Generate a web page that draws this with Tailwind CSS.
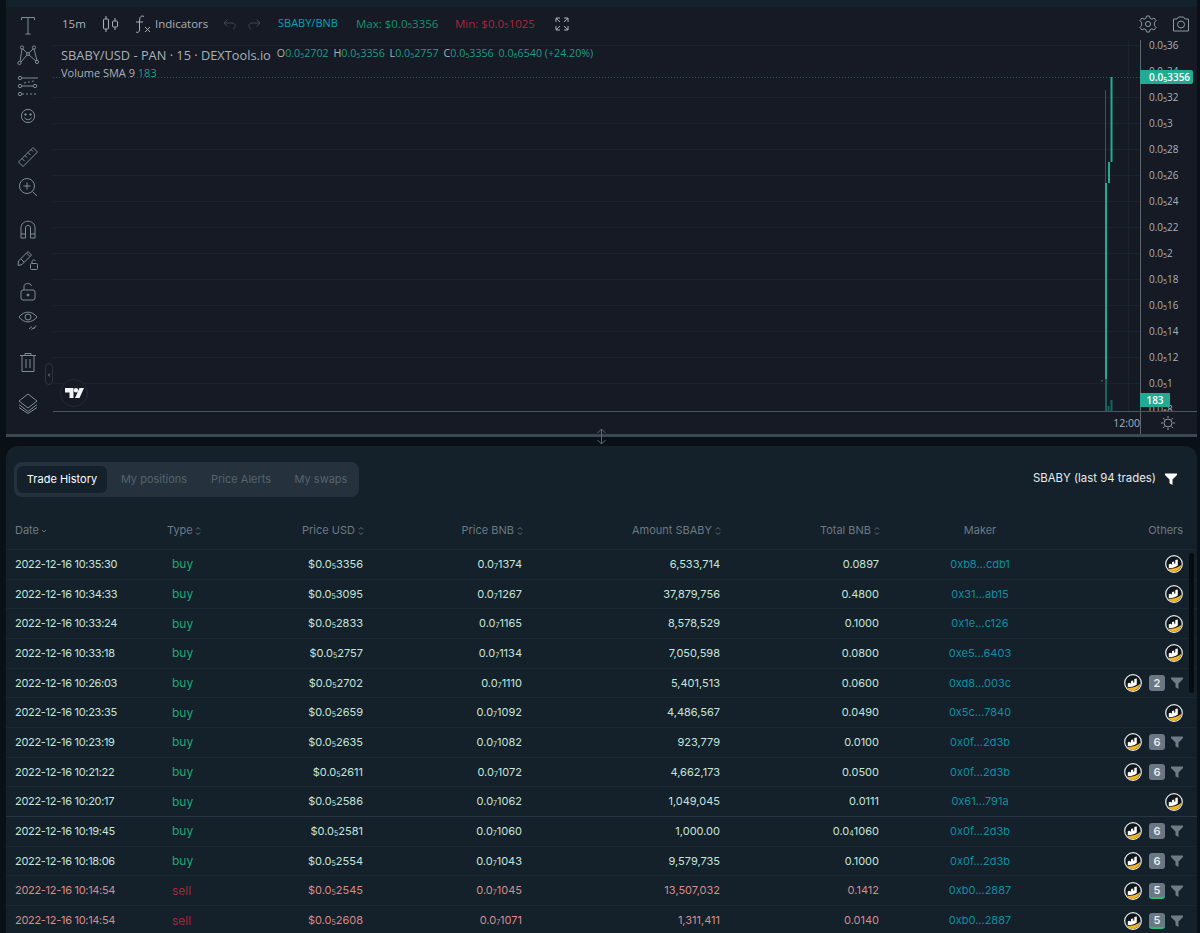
<!DOCTYPE html>
<html lang="en">
  <head>
    <meta charset="UTF-8" />
    <title>SBABY/BNB</title>
    <script src="https://cdn.jsdelivr.net/npm/@tailwindcss/browser@4"></script>
  </head>
  <body class="bg-[#0a1116] w-[1200px] h-[933px] overflow-hidden">
    <svg class="hidden">
      <symbol id="bit" viewBox="0 0 18 18">
        <circle cx="9" cy="9" r="8.300" fill="#10171c" stroke="#e8edee" stroke-width="1.200" />
        <path d="M3 13.500C7 14.500 12.500 13 16.400 9.800C16 13.500 12.500 16.900 9 16.900C6.500 16.900 4.500 15.600 3 13.500Z" fill="#f0b429" />
        <path d="M3.800 13V9.200L6 8.800V9.500L7 9.300V6.900L9.200 6.400V8.800L10.300 8.500V5L12.800 4.400V10.500C10 12.500 6.500 13.300 3.800 13Z" fill="#fff" />
      </symbol>
      <symbol id="fun" viewBox="0 0 12 12">
        <path d="M0 .5H12V2L7.500 6.500V12L4.500 10.200V6.500L0 2Z" fill="currentColor" />
      </symbol>
      <symbol id="sort" viewBox="0 0 6 10">
        <path d="M1 3.500L3 1.500L5 3.500M1 6.500L3 8.500L5 6.500" fill="none" stroke="currentColor" stroke-width=".9" />
      </symbol>
    </svg>

    <div class="h-[7px] ml-[6px] mr-[3px] bg-[#13212a]"></div>

    <!-- chart -->
    <div class="relative ml-[6px] mr-[3px] h-[430px] flex bg-[#161a25] border-b-[3px] border-[#3b4853] font-['Open_Sans',sans-serif] text-[#a9b1b8]">
      <div class="w-[47px] shrink-0 flex flex-col items-center pt-[7px] pr-[3px] text-[#7f8c94]">
        <svg class="w-[22px] h-[22px]" viewBox="0 0 22 22" fill="none" stroke="currentColor"><path d="M4.500 6V3.500H17.500V6M11 3.500V20M8.500 20H13.500" /></svg>
        <svg class="w-[22px] h-[22px] mt-[8px]" viewBox="0 0 22 22" fill="none" stroke="currentColor"><circle cx="5" cy="3.500" r="1.600" /><circle cx="17" cy="3.500" r="1.600" /><circle cx="2.500" cy="19" r="1.600" /><circle cx="20" cy="18" r="1.600" /><circle cx="11" cy="10" r="1.400" /><path d="M5 5L3 17.500M4 18L10 11M6 5L10 9M16 5L12 9M12 11L19 17M17 5L20 16.500" /></svg>
        <svg class="w-[22px] h-[22px] mt-[9px]" viewBox="0 0 22 22" fill="none" stroke="currentColor"><circle cx="3" cy="3" r="1.700" /><path d="M5 3H21" /><circle cx="3" cy="11" r="1.700" /><circle cx="18" cy="11" r="1.700" /><path d="M5 11H16" /><circle cx="3" cy="19" r="1.700" /><path d="M5 19H21M7 8L17 6" stroke-dasharray="2 2" /></svg>
        <svg class="w-[22px] h-[22px] mt-[8px]" viewBox="0 0 22 22" fill="none" stroke="currentColor"><circle cx="11" cy="11" r="6.600" /><circle cx="8.500" cy="9.500" r=".8" fill="currentColor" /><circle cx="13.500" cy="9.500" r=".8" fill="currentColor" /><path d="M7.500 12.500C9 15.500 13 15.500 14.500 12.500" /></svg>
        <svg class="w-[22px] h-[22px] mt-[19px]" viewBox="0 0 22 22" fill="none" stroke="currentColor"><path d="M1.500 16L16 1.500L20.500 6L6 20.500ZM5 12.500L7.500 15M8 9.500L10 11.500M11 6.500L13.500 9M14 3.500L16 5.500" /></svg>
        <svg class="w-[22px] h-[22px] mt-[8px]" viewBox="0 0 22 22" fill="none" stroke="currentColor"><circle cx="10" cy="10" r="7.500" /><path d="M10 6.500V13.500M6.500 10H13.500M15.500 15.500L20 20" /></svg>
        <svg class="w-[22px] h-[22px] mt-[20px]" viewBox="0 0 22 22" fill="none" stroke="currentColor"><path d="M4 20V10C4 1 18 1 18 10V20H13.500V10C13.500 6.500 8.500 6.500 8.500 10V20ZM4 16H8.500M13.500 16H18" /></svg>
        <svg class="w-[22px] h-[22px] mt-[9px]" viewBox="0 0 22 22" fill="none" stroke="currentColor"><path d="M1.500 12L11 2.500L14.500 6L5 15.500L1 16.500ZM9.500 4L13 7.500M4 10L7 13" /><rect x="13.500" y="14.500" width="7" height="6" rx="1" /><path d="M15 14.500V12.500C15 10.500 18 10.500 18.500 12" /></svg>
        <svg class="w-[22px] h-[22px] mt-[9px]" viewBox="0 0 22 22" fill="none" stroke="currentColor"><rect x="4" y="10" width="14" height="10" rx="2" /><path d="M7 10V6.500C7 2.500 14 2.500 14.500 6" /><circle cx="11" cy="15" r="1" fill="currentColor" /></svg>
        <svg class="w-[22px] h-[22px] mt-[7px]" viewBox="0 0 22 22" fill="none" stroke="currentColor"><path d="M2 8C7 1.500 15 1.500 20 8C15 14.500 7 14.500 2 8Z" /><circle cx="11" cy="8" r="3" /><path d="M12 20L15 17.500M16 19.500C18 19.500 18.500 18 19 16.500M14.500 20.500L18 18" /></svg>
        <svg class="w-[22px] h-[22px] mt-[20px]" viewBox="0 0 22 22" fill="none" stroke="currentColor"><path d="M3 4.500H19M8 4.500V2.500H14V4.500M5 4.500V20.500H17V4.500M9 8V17M13 8V17" /></svg>
        <svg class="w-[22px] h-[22px] mt-[19px]" viewBox="0 0 22 22" fill="none" stroke="currentColor"><path d="M11 2L20 9L11 16L2 9ZM2 12.500L11 19.500L20 12.500M2 15.500L11 21.500L20 15.500" /></svg>
      </div>

      <div class="flex-1 flex flex-col min-w-0">
        <div class="h-[33px] flex items-center text-[11.5px] text-[#a9b1b8] whitespace-nowrap">
          <span class="ml-[9px] w-[23px]">15m</span>
          <svg class="ml-[16px] w-[20px] h-[18px]" viewBox="0 0 20 18" fill="none" stroke="currentColor"><path d="M5 1V17M14 3V15" /><rect x="2.500" y="4" width="5" height="10" rx="1" fill="#161a25" /><rect x="11.500" y="6" width="5" height="6" rx="1" fill="#161a25" /></svg>
          <svg class="ml-[11px] w-[20px] h-[20px]" viewBox="0 0 20 20" fill="none" stroke="currentColor"><path d="M12 2.500C9 1 8 3 7.500 6V16C7 18.500 6 19 4 18M4 8H11M13 13L18 18M18 13L13 18" /></svg>
          <span class="ml-[3px] w-[53px]">Indicators</span>
          <svg class="ml-[15px] w-[14px] h-[12px] text-[#3c4650]" viewBox="0 0 14 12" fill="none" stroke="currentColor"><path d="M4.500 1.500L1 5L4.500 8.500M1 5H9C13 5 13 10 10 11" /></svg>
          <svg class="ml-[10px] w-[14px] h-[12px] text-[#3c4650]" viewBox="0 0 14 12" fill="none" stroke="currentColor"><path d="M9.500 1.500L13 5L9.500 8.500M13 5H5C1 5 1 10 4 11" /></svg>
          <span class="ml-[17px] w-[60px] text-[11px] text-[#09a0b8]">SBABY/BNB</span>
          <span class="ml-[18px] w-[81px] text-[#16926f]">Max: $0.0<span class="text-[8px]">5</span>3356</span>
          <span class="ml-[18px] w-[78px] text-[#a9263a]">Min: $0.0<span class="text-[8px]">5</span>1025</span>
          <svg class="ml-[22px] w-[14px] h-[14px]" viewBox="0 0 14 14" fill="none" stroke="currentColor"><path d="M1 5V1H5M1 1L5 5M9 1H13V5M13 1L9 5M1 9V13H5M1 13L5 9M13 9V13H9M13 13L9 9" /></svg>
          <svg class="ml-auto w-[18px] h-[18px] text-[#8d9aa2]" viewBox="0 0 18 18" fill="none" stroke="currentColor"><circle cx="9" cy="9" r="2.600" /><path d="M7.500 1H10.500L11 3.300L13 4.200L15 3L17 5.600L15.400 7.300V10.700L17 12.400L15 15L13 13.800L11 14.700L10.500 17H7.500L7 14.700L5 13.800L3 15L1 12.400L2.600 10.700V7.300L1 5.600L3 3L5 4.200L7 3.300Z" /></svg>
          <svg class="ml-[15px] mr-[7px] w-[18px] h-[16px] text-[#8d9aa2]" viewBox="0 0 18 16" fill="none" stroke="currentColor"><path d="M1.500 3H5L6.500 1H11.500L13 3H16.500V15H1.500Z" /><circle cx="9" cy="8.500" r="3.500" /></svg>
        </div>

        <div class="flex h-[371px]">
          <div class="relative w-[1087px] shrink-0 overflow-hidden">
            <svg class="absolute inset-0 w-full h-full" viewBox="53 40 1087 371">
              <g stroke="#1b232d">
                <path d="M53 45.500H1140M53 97.500H1140M53 123.500H1140M53 149.500H1140M53 175.500H1140M53 201.500H1140M53 227.500H1140M53 253.500H1140M53 279.500H1140M53 305.500H1140M53 331.500H1140M53 357.500H1140M53 383.500H1140M1128.500 40V411" />
              </g>
              <path d="M53 77.500H1140" stroke="#33504e" stroke-dasharray="1 2" />
              <path d="M1105.500 90V183" stroke="#2b5a5c" />
              <path d="M1106 183V379" stroke="#22ab94" stroke-width="2" />
              <path d="M1109 162V183" stroke="#22ab94" stroke-width="2" />
              <path d="M1111.500 77V162" stroke="#22ab94" stroke-width="2" />
              <path d="M1106 379V411M1111.500 400V411M1108.500 406V411M1102 380V381.500" stroke="#17645f" stroke-width="2" />
            </svg>
            <div class="absolute left-[8px] top-[4px] flex items-center whitespace-nowrap">
              <span class="text-[12.800px] leading-[18px]">SBABY/USD - PAN · 15 · DEXTools.io</span>
              <span class="ml-[6px] text-[10.700px] leading-[18px] text-[#1d9c88]"><span class="text-[#a9b1b8]">O</span>0.0<span class="text-[7px] align-[-1px]">5</span>2702 <span class="text-[#a9b1b8] ml-[2px]">H</span>0.0<span class="text-[7px] align-[-1px]">5</span>3356 <span class="text-[#a9b1b8] ml-[2px]">L</span>0.0<span class="text-[7px] align-[-1px]">5</span>2757 <span class="text-[#a9b1b8] ml-[2px]">C</span>0.0<span class="text-[7px] align-[-1px]">5</span>3356 <span class="ml-[2px]">0.0<span class="text-[7px] align-[-1px]">6</span>6540 (+24.20%)</span></span>
            </div>
            <div class="absolute left-[8px] top-[25px] text-[11px] leading-[16px] whitespace-nowrap">Volume SMA 9 <span class="text-[#1d9c88]">183</span></div>
            <div class="absolute left-[7px] top-[339px] w-[28px] h-[28px] rounded-full bg-[#161a25] border border-[#222a36] flex items-center justify-center">
              <svg class="w-[19px] h-[10px]" viewBox="0 0 19 10" fill="#f2f4f5"><path d="M0 0H8.500V10H4.500V4.500H0ZM14.500 0H19L14.500 10H10Z" /><circle cx="11" cy="2.200" r="2.200" /></svg>
            </div>
          </div>
          <div class="flex-1 h-full border-l border-[#5b666e] overflow-hidden text-[10px] pl-[8px]">
            <div class="-mt-[8px]">
              <div class="h-[26px] leading-[26px]">0.0<span class="text-[7px] align-[-1px]">5</span>36</div>
              <div class="h-[26px] leading-[26px]">0.0<span class="text-[7px] align-[-1px]">5</span>34</div>
              <div class="h-[26px] leading-[26px]">0.0<span class="text-[7px] align-[-1px]">5</span>32</div>
              <div class="h-[26px] leading-[26px]">0.0<span class="text-[7px] align-[-1px]">5</span>3</div>
              <div class="h-[26px] leading-[26px]">0.0<span class="text-[7px] align-[-1px]">5</span>28</div>
              <div class="h-[26px] leading-[26px]">0.0<span class="text-[7px] align-[-1px]">5</span>26</div>
              <div class="h-[26px] leading-[26px]">0.0<span class="text-[7px] align-[-1px]">5</span>24</div>
              <div class="h-[26px] leading-[26px]">0.0<span class="text-[7px] align-[-1px]">5</span>22</div>
              <div class="h-[26px] leading-[26px]">0.0<span class="text-[7px] align-[-1px]">5</span>2</div>
              <div class="h-[26px] leading-[26px]">0.0<span class="text-[7px] align-[-1px]">5</span>18</div>
              <div class="h-[26px] leading-[26px]">0.0<span class="text-[7px] align-[-1px]">5</span>16</div>
              <div class="h-[26px] leading-[26px]">0.0<span class="text-[7px] align-[-1px]">5</span>14</div>
              <div class="h-[26px] leading-[26px]">0.0<span class="text-[7px] align-[-1px]">5</span>12</div>
              <div class="h-[26px] leading-[26px]">0.0<span class="text-[7px] align-[-1px]">5</span>1</div>
              <div class="h-[26px] leading-[26px]">0.0<span class="text-[7px] align-[-1px]">6</span>8</div>
            </div>
          </div>
        </div>

        <div class="h-[23px] border-t border-[#4a555e] flex text-[10.500px]">
          <div class="w-[1087px] shrink-0 text-right leading-[22px]">12:00</div>
          <div class="flex-1 border-l border-[#5b666e] flex items-center justify-center pr-[3px]">
            <svg class="w-[14px] h-[14px] text-[#8d9aa2]" viewBox="0 0 14 14" fill="none" stroke="currentColor"><circle cx="7" cy="7" r="4" /><path d="M7 0V2M7 12V14M0 7H2M12 7H14M2 2L3.500 3.500M10.500 10.500L12 12M12 2L10.500 3.500M3.500 10.500L2 12" /></svg>
          </div>
        </div>
      </div>

      <!-- last price tags on the axis -->
      <div class="absolute left-[1134px] top-[63px] w-[53px] h-[14px] bg-[#22ab94] rounded-r-[2px] pl-[9px] text-[10px] leading-[14px] font-semibold text-white">0.0<span class="text-[7px] align-[-1px]">5</span>3356</div>
      <div class="absolute left-[1134px] top-[386px] w-[30px] h-[14px] bg-[#22ab94] text-center text-[10px] leading-[14px] font-semibold text-white">183</div>
      <div class="absolute left-[39px] top-[356px] w-[8px] h-[22px] rounded-full border border-[#2b3440] bg-[#161a25] flex items-center justify-center text-[8px] leading-none">‹</div>
    </div>

    <!-- drag handle -->
    <div class="relative h-[9px]">
      <svg class="absolute left-[596px] -top-[9px] w-[11px] h-[17px] text-[#5d6a74]" viewBox="0 0 11 17" fill="none" stroke="currentColor"><path d="M5.500 1V16M1.500 5L5.500 1L9.500 5M1.500 12L5.500 16L9.500 12" /></svg>
    </div>

    <!-- trades panel -->
    <div class="relative ml-[6px] mr-[3px] h-[487px] bg-[#14202a] rounded-t-[12px] font-['Inter',sans-serif] text-[11px] overflow-hidden">
      <div class="flex items-center justify-between h-[66px] pl-[8px] pr-[20px]">
        <div class="flex items-center h-[35px] pl-[3px] pr-[11px] rounded-lg bg-[#25323d] text-[#55626d] whitespace-nowrap">
          <div class="h-[27px] w-[90px] rounded-md bg-[#14202a] text-white text-center leading-[27px]">Trade History</div>
          <div class="w-[68px] ml-[13px] text-center">My positions</div>
          <div class="w-[60px] ml-[23px] text-center">Price Alerts</div>
          <div class="w-[54px] ml-[23px] text-center">My swaps</div>
        </div>
        <div class="flex items-center text-[11.400px] text-[#e6ecee]">
          <span>SBABY (last 94 trades)</span>
          <svg class="ml-[9px] w-[12px] h-[12px] text-white"><use href="#fun" /></svg>
        </div>
      </div>

      <div class="grid grid-cols-[150px_40px_159px_159px_198px_159px_200px_103px] pl-[9px] h-[38px] items-center border-b border-[#1a2832] text-[#6b7a84]">
        <div class="flex items-center">Date<svg class="ml-[2px] w-[6px] h-[4px]" viewBox="0 0 6 4" fill="none" stroke="currentColor" stroke-width=".9"><path d="M1 1L3 3L5 1" /></svg></div>
        <div class="pl-[2px] flex items-center">Type<svg class="ml-[2px] w-[6px] h-[10px]"><use href="#sort" /></svg></div>
        <div class="flex items-center justify-end">Price USD<svg class="ml-[3px] w-[6px] h-[10px]"><use href="#sort" /></svg></div>
        <div class="flex items-center justify-end">Price BNB<svg class="ml-[3px] w-[6px] h-[10px]"><use href="#sort" /></svg></div>
        <div class="flex items-center justify-end">Amount SBABY<svg class="ml-[3px] w-[6px] h-[10px]"><use href="#sort" /></svg></div>
        <div class="flex items-center justify-end">Total BNB<svg class="ml-[3px] w-[6px] h-[10px]"><use href="#sort" /></svg></div>
        <div class="text-center">Maker</div>
        <div class="text-right">Others</div>
      </div>

      <div class="grid grid-cols-[150px_40px_159px_159px_198px_159px_200px_103px] pl-[9px] h-[29.67px] items-center border-b border-[#1a2832] text-[#c5e6dc]">
        <div class="tracking-[-0.3px]">2022-12-16 10:35:30</div><div class="pl-[7px] text-[12px] text-[#1fa774]">buy</div><div class="text-right pr-[1px]">$0.0<span class="text-[7px] align-[-1px]">5</span>3356</div><div class="text-right pr-[1px]">0.0<span class="text-[7px] align-[-1px]">7</span>1374</div><div class="text-right pr-[1px]">6,533,714</div><div class="text-right pr-[1px]">0.0897</div><div class="text-center text-[#0e8fa3]">0xb8...cdb1</div>
        <div class="flex justify-end items-center"><svg class="w-[18px] h-[18px]"><use href="#bit" /></svg></div>
      </div>
      <div class="grid grid-cols-[150px_40px_159px_159px_198px_159px_200px_103px] pl-[9px] h-[29.67px] items-center border-b border-[#1a2832] text-[#c5e6dc]">
        <div class="tracking-[-0.3px]">2022-12-16 10:34:33</div><div class="pl-[7px] text-[12px] text-[#1fa774]">buy</div><div class="text-right pr-[1px]">$0.0<span class="text-[7px] align-[-1px]">5</span>3095</div><div class="text-right pr-[1px]">0.0<span class="text-[7px] align-[-1px]">7</span>1267</div><div class="text-right pr-[1px]">37,879,756</div><div class="text-right pr-[1px]">0.4800</div><div class="text-center text-[#0e8fa3]">0x31...ab15</div>
        <div class="flex justify-end items-center"><svg class="w-[18px] h-[18px]"><use href="#bit" /></svg></div>
      </div>
      <div class="grid grid-cols-[150px_40px_159px_159px_198px_159px_200px_103px] pl-[9px] h-[29.67px] items-center border-b border-[#1a2832] text-[#c5e6dc]">
        <div class="tracking-[-0.3px]">2022-12-16 10:33:24</div><div class="pl-[7px] text-[12px] text-[#1fa774]">buy</div><div class="text-right pr-[1px]">$0.0<span class="text-[7px] align-[-1px]">5</span>2833</div><div class="text-right pr-[1px]">0.0<span class="text-[7px] align-[-1px]">7</span>1165</div><div class="text-right pr-[1px]">8,578,529</div><div class="text-right pr-[1px]">0.1000</div><div class="text-center text-[#0e8fa3]">0x1e...c126</div>
        <div class="flex justify-end items-center"><svg class="w-[18px] h-[18px]"><use href="#bit" /></svg></div>
      </div>
      <div class="grid grid-cols-[150px_40px_159px_159px_198px_159px_200px_103px] pl-[9px] h-[29.67px] items-center border-b border-[#1a2832] text-[#c5e6dc]">
        <div class="tracking-[-0.3px]">2022-12-16 10:33:18</div><div class="pl-[7px] text-[12px] text-[#1fa774]">buy</div><div class="text-right pr-[1px]">$0.0<span class="text-[7px] align-[-1px]">5</span>2757</div><div class="text-right pr-[1px]">0.0<span class="text-[7px] align-[-1px]">7</span>1134</div><div class="text-right pr-[1px]">7,050,598</div><div class="text-right pr-[1px]">0.0800</div><div class="text-center text-[#0e8fa3]">0xe5...6403</div>
        <div class="flex justify-end items-center"><svg class="w-[18px] h-[18px]"><use href="#bit" /></svg></div>
      </div>
      <div class="grid grid-cols-[150px_40px_159px_159px_198px_159px_200px_103px] pl-[9px] h-[29.67px] items-center border-b border-[#1a2832] text-[#c5e6dc]">
        <div class="tracking-[-0.3px]">2022-12-16 10:26:03</div><div class="pl-[7px] text-[12px] text-[#1fa774]">buy</div><div class="text-right pr-[1px]">$0.0<span class="text-[7px] align-[-1px]">5</span>2702</div><div class="text-right pr-[1px]">0.0<span class="text-[7px] align-[-1px]">7</span>1110</div><div class="text-right pr-[1px]">5,401,513</div><div class="text-right pr-[1px]">0.0600</div><div class="text-center text-[#0e8fa3]">0xd8...003c</div>
        <div class="flex justify-end items-center"><svg class="w-[18px] h-[18px]"><use href="#bit" /></svg><span class="ml-[7px] w-[16px] h-[16px] rounded-[3px] bg-[#6b7785] text-center leading-[16px] font-semibold text-[#e6ecee]">2</span><svg class="ml-[6px] w-[12px] h-[12px] text-[#6f7b85]"><use href="#fun" /></svg></div>
      </div>
      <div class="grid grid-cols-[150px_40px_159px_159px_198px_159px_200px_103px] pl-[9px] h-[29.67px] items-center border-b border-[#1a2832] text-[#c5e6dc]">
        <div class="tracking-[-0.3px]">2022-12-16 10:23:35</div><div class="pl-[7px] text-[12px] text-[#1fa774]">buy</div><div class="text-right pr-[1px]">$0.0<span class="text-[7px] align-[-1px]">5</span>2659</div><div class="text-right pr-[1px]">0.0<span class="text-[7px] align-[-1px]">7</span>1092</div><div class="text-right pr-[1px]">4,486,567</div><div class="text-right pr-[1px]">0.0490</div><div class="text-center text-[#0e8fa3]">0x5c...7840</div>
        <div class="flex justify-end items-center"><svg class="w-[18px] h-[18px]"><use href="#bit" /></svg></div>
      </div>
      <div class="grid grid-cols-[150px_40px_159px_159px_198px_159px_200px_103px] pl-[9px] h-[29.67px] items-center border-b border-[#1a2832] text-[#c5e6dc]">
        <div class="tracking-[-0.3px]">2022-12-16 10:23:19</div><div class="pl-[7px] text-[12px] text-[#1fa774]">buy</div><div class="text-right pr-[1px]">$0.0<span class="text-[7px] align-[-1px]">5</span>2635</div><div class="text-right pr-[1px]">0.0<span class="text-[7px] align-[-1px]">7</span>1082</div><div class="text-right pr-[1px]">923,779</div><div class="text-right pr-[1px]">0.0100</div><div class="text-center text-[#0e8fa3]">0x0f...2d3b</div>
        <div class="flex justify-end items-center"><svg class="w-[18px] h-[18px]"><use href="#bit" /></svg><span class="ml-[7px] w-[16px] h-[16px] rounded-[3px] bg-[#6b7785] text-center leading-[16px] font-semibold text-[#e6ecee]">6</span><svg class="ml-[6px] w-[12px] h-[12px] text-[#6f7b85]"><use href="#fun" /></svg></div>
      </div>
      <div class="grid grid-cols-[150px_40px_159px_159px_198px_159px_200px_103px] pl-[9px] h-[29.67px] items-center border-b border-[#1a2832] text-[#c5e6dc]">
        <div class="tracking-[-0.3px]">2022-12-16 10:21:22</div><div class="pl-[7px] text-[12px] text-[#1fa774]">buy</div><div class="text-right pr-[1px]">$0.0<span class="text-[7px] align-[-1px]">5</span>2611</div><div class="text-right pr-[1px]">0.0<span class="text-[7px] align-[-1px]">7</span>1072</div><div class="text-right pr-[1px]">4,662,173</div><div class="text-right pr-[1px]">0.0500</div><div class="text-center text-[#0e8fa3]">0x0f...2d3b</div>
        <div class="flex justify-end items-center"><svg class="w-[18px] h-[18px]"><use href="#bit" /></svg><span class="ml-[7px] w-[16px] h-[16px] rounded-[3px] bg-[#6b7785] text-center leading-[16px] font-semibold text-[#e6ecee]">6</span><svg class="ml-[6px] w-[12px] h-[12px] text-[#6f7b85]"><use href="#fun" /></svg></div>
      </div>
      <div class="grid grid-cols-[150px_40px_159px_159px_198px_159px_200px_103px] pl-[9px] h-[29.67px] items-center border-b border-[#263540] text-[#c5e6dc]">
        <div class="tracking-[-0.3px]">2022-12-16 10:20:17</div><div class="pl-[7px] text-[12px] text-[#1fa774]">buy</div><div class="text-right pr-[1px]">$0.0<span class="text-[7px] align-[-1px]">5</span>2586</div><div class="text-right pr-[1px]">0.0<span class="text-[7px] align-[-1px]">7</span>1062</div><div class="text-right pr-[1px]">1,049,045</div><div class="text-right pr-[1px]">0.0111</div><div class="text-center text-[#0e8fa3]">0x61...791a</div>
        <div class="flex justify-end items-center"><svg class="w-[18px] h-[18px]"><use href="#bit" /></svg></div>
      </div>
      <div class="grid grid-cols-[150px_40px_159px_159px_198px_159px_200px_103px] pl-[9px] h-[29.67px] items-center border-b border-[#1a2832] text-[#c5e6dc]">
        <div class="tracking-[-0.3px]">2022-12-16 10:19:45</div><div class="pl-[7px] text-[12px] text-[#1fa774]">buy</div><div class="text-right pr-[1px]">$0.0<span class="text-[7px] align-[-1px]">5</span>2581</div><div class="text-right pr-[1px]">0.0<span class="text-[7px] align-[-1px]">7</span>1060</div><div class="text-right pr-[1px]">1,000.00</div><div class="text-right pr-[1px]">0.0<span class="text-[7px] align-[-1px]">4</span>1060</div><div class="text-center text-[#0e8fa3]">0x0f...2d3b</div>
        <div class="flex justify-end items-center"><svg class="w-[18px] h-[18px]"><use href="#bit" /></svg><span class="ml-[7px] w-[16px] h-[16px] rounded-[3px] bg-[#6b7785] text-center leading-[16px] font-semibold text-[#e6ecee]">6</span><svg class="ml-[6px] w-[12px] h-[12px] text-[#6f7b85]"><use href="#fun" /></svg></div>
      </div>
      <div class="grid grid-cols-[150px_40px_159px_159px_198px_159px_200px_103px] pl-[9px] h-[29.67px] items-center border-b border-[#1a2832] text-[#c5e6dc]">
        <div class="tracking-[-0.3px]">2022-12-16 10:18:06</div><div class="pl-[7px] text-[12px] text-[#1fa774]">buy</div><div class="text-right pr-[1px]">$0.0<span class="text-[7px] align-[-1px]">5</span>2554</div><div class="text-right pr-[1px]">0.0<span class="text-[7px] align-[-1px]">7</span>1043</div><div class="text-right pr-[1px]">9,579,735</div><div class="text-right pr-[1px]">0.1000</div><div class="text-center text-[#0e8fa3]">0x0f...2d3b</div>
        <div class="flex justify-end items-center"><svg class="w-[18px] h-[18px]"><use href="#bit" /></svg><span class="ml-[7px] w-[16px] h-[16px] rounded-[3px] bg-[#6b7785] text-center leading-[16px] font-semibold text-[#e6ecee]">6</span><svg class="ml-[6px] w-[12px] h-[12px] text-[#6f7b85]"><use href="#fun" /></svg></div>
      </div>
      <div class="grid grid-cols-[150px_40px_159px_159px_198px_159px_200px_103px] pl-[9px] h-[29.67px] items-center border-b border-[#1a2832] text-[#d98c8c]">
        <div class="tracking-[-0.3px]">2022-12-16 10:14:54</div><div class="pl-[7px] text-[12px] text-[#a3283a]">sell</div><div class="text-right pr-[1px]">$0.0<span class="text-[7px] align-[-1px]">5</span>2545</div><div class="text-right pr-[1px]">0.0<span class="text-[7px] align-[-1px]">7</span>1045</div><div class="text-right pr-[1px]">13,507,032</div><div class="text-right pr-[1px]">0.1412</div><div class="text-center text-[#0e8fa3]">0xb0...2887</div>
        <div class="flex justify-end items-center"><svg class="w-[18px] h-[18px]"><use href="#bit" /></svg><span class="ml-[7px] w-[16px] h-[16px] rounded-[3px] bg-[#6b7785] border-b-2 border-[#1fbf75] text-center leading-[15px] font-semibold text-[#e6ecee]">5</span><svg class="ml-[6px] w-[12px] h-[12px] text-[#6f7b85]"><use href="#fun" /></svg></div>
      </div>
      <div class="grid grid-cols-[150px_40px_159px_159px_198px_159px_200px_103px] pl-[9px] h-[29.67px] items-center text-[#d98c8c]">
        <div class="tracking-[-0.3px]">2022-12-16 10:14:54</div><div class="pl-[7px] text-[12px] text-[#a3283a]">sell</div><div class="text-right pr-[1px]">$0.0<span class="text-[7px] align-[-1px]">5</span>2608</div><div class="text-right pr-[1px]">0.0<span class="text-[7px] align-[-1px]">7</span>1071</div><div class="text-right pr-[1px]">1,311,411</div><div class="text-right pr-[1px]">0.0140</div><div class="text-center text-[#0e8fa3]">0xb0...2887</div>
        <div class="flex justify-end items-center"><svg class="w-[18px] h-[18px]"><use href="#bit" /></svg><span class="ml-[7px] w-[16px] h-[16px] rounded-[3px] bg-[#6b7785] border-b-2 border-[#1fbf75] text-center leading-[15px] font-semibold text-[#e6ecee]">5</span><svg class="ml-[6px] w-[12px] h-[12px] text-[#6f7b85]"><use href="#fun" /></svg></div>
      </div>

      <div class="absolute left-[1183px] top-[107px] w-[5px] h-[140px] rounded-full bg-[#070c10]"></div>
    </div>
  </body>
</html>
